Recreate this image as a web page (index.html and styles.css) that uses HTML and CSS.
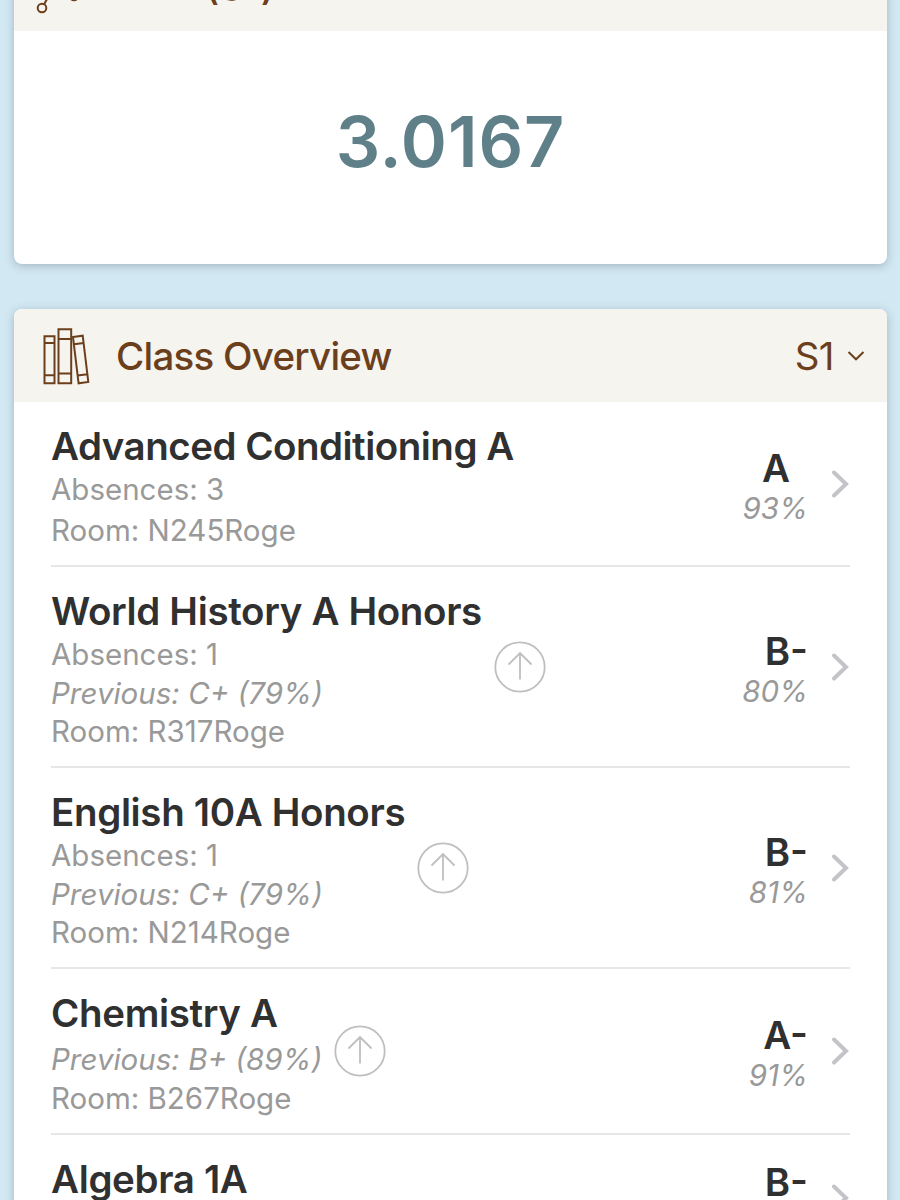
FILE: index.html
```
<!DOCTYPE html>
<html lang="en">
<head>
  <meta charset="utf-8">
  <title>Grades</title>
  <link rel="stylesheet" href="styles.css">
</head>
<body>
  <div class="card gpa-card">
    <div class="card-header">
      <svg class="header-icon" width="60" height="60" viewBox="0 0 60 60" fill="none" stroke="#6b3f1c" stroke-width="2">
        <circle cx="8" cy="53" r="4.3"/>
        <circle cx="22" cy="28" r="4.3"/>
        <circle cx="40" cy="41" r="4.3"/>
        <circle cx="50" cy="10" r="4.3"/>
        <path d="M10.2 49L20 32M25.5 30.5L36.5 38.5M41.3 37L48.7 14"/>
      </svg>
      <h2>GPA (S1)</h2>
    </div>
    <div class="gpa">3.0167</div>
  </div>

  <div class="card">
    <div class="card-header">
      <svg class="header-icon" width="60" height="60" viewBox="0 0 60 60" fill="none" stroke="#6b3f1c" stroke-width="2">
        <path d="M10.5 10.2h10v47h-10zM10.5 17h10M10.5 49.3h10"/>
        <path d="M24.5 3.2h12.7v54H24.5zM24.5 13h12.7M24.5 47.6h12.7"/>
        <path d="M39 11l9.7-1.3 5.6 46.3-9.7 1.3zM40 18.2l9.7-1.3M43.6 49.5l9.7-1.3"/>
      </svg>
      <h2>Class Overview</h2>
      <div class="term">
        <span>S1</span>
        <svg width="18" height="12" viewBox="0 0 18 12" fill="none" stroke="#6b3f1c" stroke-width="1.9"><path d="M1.5 2L9 9.3 16.5 2"/></svg>
      </div>
    </div>

    <div class="row two-lines">
      <div class="info">
        <h3 class="long">Advanced Conditioning A</h3>
        <p>Absences: 3</p>
        <p>Room: N245Roge</p>
      </div>
      <div class="grade">
        <b class="plain">A</b>
        <i>93%</i>
      </div>
      <svg class="chevron" width="20" height="30" viewBox="0 0 20 30"><path d="M4 3.5L16 15 4 26.5"/></svg>
    </div>

    <div class="row">
      <div class="info">
        <h3>World History A Honors</h3>
        <p>Absences: 1</p>
        <p class="previous">Previous: C+ (79%)</p>
        <p>Room: R317Roge</p>
      </div>
      <svg class="arrow" width="52" height="52" viewBox="0 0 52 52"><circle cx="26" cy="26" r="24.7"/><path d="M26 38.5V12M14.5 23.5L26 12l11.5 11.5"/></svg>
      <div class="grade">
        <b>B-</b>
        <i>80%</i>
      </div>
      <svg class="chevron" width="20" height="30" viewBox="0 0 20 30"><path d="M4 3.5L16 15 4 26.5"/></svg>
    </div>

    <div class="row">
      <div class="info">
        <h3>English 10A Honors</h3>
        <p>Absences: 1</p>
        <p class="previous">Previous: C+ (79%)</p>
        <p>Room: N214Roge</p>
      </div>
      <svg class="arrow" width="52" height="52" viewBox="0 0 52 52"><circle cx="26" cy="26" r="24.7"/><path d="M26 38.5V12M14.5 23.5L26 12l11.5 11.5"/></svg>
      <div class="grade">
        <b>B-</b>
        <i>81%</i>
      </div>
      <svg class="chevron" width="20" height="30" viewBox="0 0 20 30"><path d="M4 3.5L16 15 4 26.5"/></svg>
    </div>

    <div class="row no-absences">
      <div class="info">
        <h3>Chemistry A</h3>
        <p class="previous">Previous: B+ (89%)</p>
        <p>Room: B267Roge</p>
      </div>
      <svg class="arrow" width="52" height="52" viewBox="0 0 52 52"><circle cx="26" cy="26" r="24.7"/><path d="M26 38.5V12M14.5 23.5L26 12l11.5 11.5"/></svg>
      <div class="grade">
        <b>A-</b>
        <i>91%</i>
      </div>
      <svg class="chevron" width="20" height="30" viewBox="0 0 20 30"><path d="M4 3.5L16 15 4 26.5"/></svg>
    </div>

    <div class="row last">
      <div class="info">
        <h3>Algebra 1A</h3>
      </div>
      <div class="grade">
        <b>B-</b>
      </div>
      <svg class="chevron" width="20" height="30" viewBox="0 0 20 30"><path d="M4 3.5L16 15 4 26.5"/></svg>
    </div>
  </div>
</body>
</html>
```
FILE: styles.css
```
* {
  box-sizing: border-box;
}

body {
  margin: 0;
  padding: 0 13px 0 14px;
  height: 1200px;
  overflow: hidden;
  display: flow-root;
  background-color: #d2e8f3;
  font-family: Inter, sans-serif;
}

h2, h3, p {
  margin: 0;
}

.card {
  background-color: #fff;
  border-radius: 8px;
  box-shadow: 0 2px 10px rgba(60, 80, 85, 0.32);
  overflow: hidden;
  margin-bottom: 45px;
}

/* header is scrolled partly off the top */
.gpa-card {
  margin-top: -62px;
  height: 326px;
}

.card-header {
  display: flex;
  align-items: center;
  height: 93px;
  padding: 0 22px 0 20px;
  background-color: #f6f4ef;
  color: #6b3f1c;
}

.header-icon {
  flex: none;
  margin-right: 22px;
}

.card-header h2 {
  font-size: 38.5px;
  font-weight: 500;
  line-height: 46px;
  letter-spacing: -0.75px;
}

.gpa-card h2 {
  letter-spacing: 0.2px;
  padding-top: 3px;
}

.term {
  display: flex;
  align-items: center;
  gap: 13px;
  margin-left: auto;
  font-size: 38.5px;
  line-height: 46px;
  letter-spacing: -0.5px;
}

.gpa {
  display: flex;
  justify-content: center;
  align-items: center;
  height: 220px;
  color: #5f8089;
  font-size: 70px;
  font-weight: 600;
  letter-spacing: 0.9px;
}

.row {
  display: flex;
  align-items: center;
  height: 201px;
  margin: 0 37px;
  border-bottom: 2px solid #e6e6e9;
}

.row.two-lines {
  height: 165px;
}

.row.no-absences {
  height: 166px;
}

.row.last {
  height: 128px;
}

.info {
  align-self: flex-start;
  padding-top: 21px;
  color: #999;
  font-size: 29.5px;
  line-height: 38.5px;
  white-space: nowrap;
}

.info h3 {
  color: #303030;
  font-size: 38.5px;
  font-weight: 600;
  line-height: 46px;
  letter-spacing: -0.35px;
  margin-bottom: 1px;
}

.info h3.long {
  letter-spacing: -0.5px;
}

.two-lines .info {
  line-height: 40.5px;
}

.two-lines .info h3 {
  margin-bottom: 0;
}

.no-absences .info h3 {
  margin-bottom: 4px;
}

.info .previous {
  font-style: italic;
}

.arrow {
  flex: none;
  margin-left: 12px;
  fill: none;
  stroke: #bfbfbf;
  stroke-width: 1.8;
}

.grade {
  display: flex;
  flex-direction: column;
  align-items: flex-end;
  height: 84px;
  padding-top: 3px;
  margin-left: auto;
  margin-right: 22px;
}

.grade b {
  color: #303030;
  font-size: 38.5px;
  font-weight: 600;
  line-height: 46px;
}

.grade b.plain {
  padding-right: 18px;
}

.grade i {
  margin-top: -2px;
  color: #999;
  font-size: 29.5px;
  line-height: 38px;
}

.chevron {
  flex: none;
  fill: none;
  stroke: #c4c4c8;
  stroke-width: 4;
  stroke-linecap: round;
}
```
